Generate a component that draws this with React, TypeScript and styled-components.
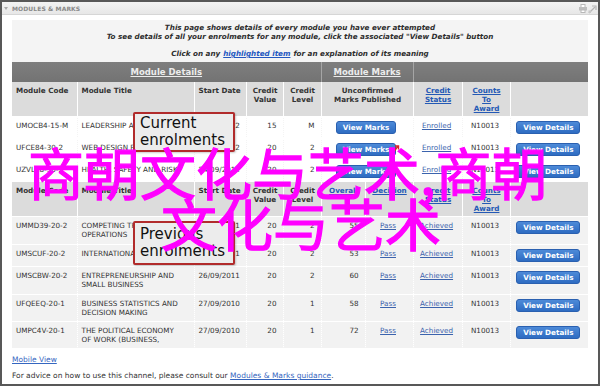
import styled, { createGlobalStyle } from 'styled-components';

type Align = 'left' | 'center' | 'right';

const GlobalStyle = createGlobalStyle`
  html, body {
    margin: 0;
    padding: 0;
    background: #fff;
  }
  body {
    font-family: 'DejaVu Sans', Verdana, sans-serif;
  }
`;

const Frame = styled.div`
  position: relative;
  width: 600px;
  height: 386px;
  box-sizing: border-box;
  border: 2px solid #585858;
  background: #fff;
  overflow: hidden;
  display: flex;
  flex-direction: column;
`;

const TitleBar = styled.div`
  height: 12px;
  flex: none;
  display: flex;
  align-items: center;
  gap: 4px;
  padding: 0 1px 0 1px;
  background: linear-gradient(#f3f3f3, #e7e7e7);
  border-bottom: 1px solid #d6d6d6;
`;

const Caret = styled.span`
  width: 0;
  height: 0;
  margin-left: 1px;
  border-left: 2.5px solid transparent;
  border-right: 2.5px solid transparent;
  border-top: 3px solid #a9a9a9;
`;

const Title = styled.span`
  flex: 1;
  font-size: 6px;
  font-weight: bold;
  color: #888;
  letter-spacing: 0.1px;
`;

const Tools = styled.div`
  display: flex;
  align-items: center;
  gap: 1px;
`;

const Body = styled.div`
  flex: 1;
  padding: 5px 10px 0;
`;

const ScrollArea = styled.div`
  height: 328px;
  overflow: hidden;
  background: #f4f4f4;
`;

const Intro = styled.div`
  padding: 3px 0 4px;
  text-align: center;
  font-size: 7.2px;
  line-height: 9px;
  font-style: italic;
  font-weight: bold;
  color: #2d2d2d;
`;

const IntroLine = styled.p<{ $gap?: number }>`
  margin: ${(p) => p.$gap ?? 0}px 0 0;
`;

const IntroLink = styled.a`
  margin: 0 3px;
  color: #2357c0;
  text-decoration: underline;
`;

const Table = styled.table`
  width: 576px;
  table-layout: fixed;
  border-collapse: collapse;
  font-size: 7.2px;
  line-height: 9px;
  color: #333;
`;

const Col = styled.col<{ $w: number }>`
  width: ${(p) => p.$w}px;
`;

const GroupCell = styled.th`
  height: 20px;
  padding: 0;
  background: linear-gradient(#7e7e7e, #737373);
  color: #ececec;
  font-size: 8.5px;
  font-weight: bold;
  text-align: center;
  border-right: 1px solid #a5a5a5;
  &:last-child {
    border-right: 0;
  }
`;

const GroupLabel = styled.span`
  text-decoration: underline;
`;

const HeadCell = styled.th<{ $align?: Align }>`
  padding: 4px 3px 3px 4px;
  background: #dcdcdc;
  text-align: ${(p) => p.$align ?? 'left'};
  vertical-align: top;
  font-weight: bold;
  white-space: pre-line;
  color: #333;
  border-right: 1px solid #fff;
  &:last-child {
    border-right: 0;
  }
`;

const HeadLink = styled.a`
  color: #2459b5;
  text-decoration: underline;
`;

const Row = styled.tr<{ $shade?: boolean }>`
  background: ${(p) => (p.$shade ? '#f2f2f2' : '#fff')};
  border-top: 1px solid #fff;
  & > td {
    padding-bottom: ${(p) => (p.$shade ? 4.5 : 4)}px;
  }
`;

const Cell = styled.td<{ $align?: Align }>`
  padding: 4px 6px 4px 4px;
  vertical-align: top;
  text-align: ${(p) => p.$align ?? 'left'};
  white-space: pre;
  overflow: hidden;
  border-right: 1px dotted #fff;
  &:last-child {
    border-right: 0;
  }
`;

const CellLink = styled.a`
  color: #3b63ad;
  text-decoration: underline;
`;

const ActionButton = styled.button<{ $w: number }>`
  display: block;
  margin: 0 auto;
  width: ${(p) => p.$w}px;
  height: 13px;
  padding: 0;
  border: 1px solid #2a60b0;
  border-radius: 3px;
  background: linear-gradient(#4d8ad8, #2e6cc2);
  color: #fff;
  font-family: 'DejaVu Sans', Verdana, sans-serif;
  font-size: 7.2px;
  font-weight: bold;
  line-height: 11px;
`;

const Footer = styled.div`
  padding-top: 7px;
  font-size: 7.5px;
  line-height: 9px;
  color: #333;
`;

const FooterLine = styled.p<{ $gap?: number }>`
  margin: ${(p) => p.$gap ?? 0}px 0 0;
`;

const FooterLink = styled.a`
  color: #3566c0;
  text-decoration: underline;
`;

const Callout = styled.div<{ $top: number; $padY: number }>`
  position: absolute;
  left: 131px;
  top: ${(p) => p.$top}px;
  width: 102px;
  box-sizing: border-box;
  padding: ${(p) => p.$padY}px 5px;
  border: 2px solid #b12b2b;
  border-radius: 2px;
  background: #ececec;
  box-shadow: 1px 1px 2px rgba(0, 0, 0, 0.2);
  font-family: 'DejaVu Sans', Verdana, sans-serif;
  font-size: 15px;
  line-height: 17px;
  color: #111;
`;

const Pointer = styled.svg`
  position: absolute;
  left: 390px;
  top: 142px;
`;

const Watermark = styled.div<{ $left: number; $top: number }>`
  position: absolute;
  left: ${(p) => p.$left}px;
  top: ${(p) => p.$top}px;
  font-family: 'Noto Sans CJK SC', sans-serif;
  font-size: 56px;
  line-height: 56px;
  color: #ff00ff;
  -webkit-text-stroke: 1.2px #ff00ff;
  white-space: nowrap;
  pointer-events: none;
`;

const widths = [65, 117, 52, 37, 38, 44, 48, 49, 48, 78];

const current = [
  { code: 'UMOCB4-15-M', title: 'LEADERSHIP AND CHANGE', start: '24/09/2012', value: '15', level: 'M' },
  { code: 'UFCE84-30-2', title: 'WEB DESIGN FOR BUSINESS', start: '24/09/2012', value: '20', level: '2' },
  { code: 'UZVLE8-30-2', title: 'HEALTH, SAFETY AND RISK', start: '24/09/2012', value: '20', level: '2' },
];

const previous = [
  { code: 'UMMD39-20-2', title: 'COMPETING THROUGH\nOPERATIONS', start: '26/09/2011', value: '20', level: '2', mark: '55' },
  { code: 'UMSCUF-20-2', title: 'INTERNATIONAL TRADE', start: '26/09/2011', value: '20', level: '2', mark: '53' },
  { code: 'UMSCBW-20-2', title: 'ENTREPRENEURSHIP AND\nSMALL BUSINESS', start: '26/09/2011', value: '20', level: '2', mark: '60' },
  { code: 'UFQEEQ-20-1', title: 'BUSINESS STATISTICS AND\nDECISION MAKING', start: '27/09/2010', value: '20', level: '1', mark: '58' },
  { code: 'UMPC4V-20-1', title: 'THE POLITICAL ECONOMY\nOF WORK (BUSINESS,', start: '27/09/2010', value: '20', level: '1', mark: '72' },
];

function PrinterIcon() {
  return (
    <svg width='8' height='9' viewBox='0 0 8 9'>
      <rect x='2' y='0.5' width='4' height='3' fill='#fff' stroke='#b8b8b8' />
      <rect x='0' y='3' width='8' height='3.5' fill='#bdbdbd' />
      <rect x='2' y='6' width='4' height='2.5' fill='#fff' stroke='#b8b8b8' />
    </svg>
  );
}

function ExpandIcon() {
  return (
    <svg width='9' height='11' viewBox='0 0 9 11'>
      <path d='M1 10 L7 4' stroke='#b5b5b5' strokeWidth='1.2' />
      <path d='M4 3 H8 V7' fill='none' stroke='#b5b5b5' strokeWidth='1.2' />
      <rect x='0.5' y='7.5' width='2.5' height='2.5' fill='#c8c8c8' />
    </svg>
  );
}

function App() {
  return (
    <>
      <GlobalStyle />
      <Frame>
        <TitleBar>
          <Caret />
          <Title>MODULES &amp; MARKS</Title>
          <Tools>
            <PrinterIcon />
            <ExpandIcon />
          </Tools>
        </TitleBar>
        <Body>
          <ScrollArea>
            <Intro>
              <IntroLine>This page shows details of every module you have ever attempted</IntroLine>
              <IntroLine>
                To see details of all your enrolments for any module, click the associated "View Details" button
              </IntroLine>
              <IntroLine $gap={8}>
                Click on any<IntroLink>highlighted item</IntroLink>for an explanation of its meaning
              </IntroLine>
            </Intro>
            <Table>
              <colgroup>
                {widths.map((w, i) => (
                  <Col key={i} $w={w} />
                ))}
              </colgroup>
              <thead>
                <tr>
                  <GroupCell colSpan={5}>
                    <GroupLabel>Module Details</GroupLabel>
                  </GroupCell>
                  <GroupCell colSpan={2}>
                    <GroupLabel>Module Marks</GroupLabel>
                  </GroupCell>
                  <GroupCell colSpan={3} />
                </tr>
                <tr>
                  <HeadCell>Module Code</HeadCell>
                  <HeadCell>Module Title</HeadCell>
                  <HeadCell>Start Date</HeadCell>
                  <HeadCell $align='center'>{'Credit\nValue'}</HeadCell>
                  <HeadCell $align='center'>{'Credit\nLevel'}</HeadCell>
                  <HeadCell $align='center' colSpan={2}>
                    {'Unconfirmed\nMarks Published'}
                  </HeadCell>
                  <HeadCell $align='center'>
                    <HeadLink>{'Credit\nStatus'}</HeadLink>
                  </HeadCell>
                  <HeadCell $align='center'>
                    <HeadLink>{'Counts\nTo\nAward'}</HeadLink>
                  </HeadCell>
                  <HeadCell />
                </tr>
              </thead>
              <tbody>
                {current.map((m) => (
                  <Row key={m.code}>
                    <Cell>{m.code}</Cell>
                    <Cell>{m.title}</Cell>
                    <Cell>{m.start}</Cell>
                    <Cell $align='right'>{m.value}</Cell>
                    <Cell $align='right'>{m.level}</Cell>
                    <Cell colSpan={2}>
                      <ActionButton $w={60}>View Marks</ActionButton>
                    </Cell>
                    <Cell $align='center'>
                      <CellLink>Enrolled</CellLink>
                    </Cell>
                    <Cell $align='center'>N10013</Cell>
                    <Cell>
                      <ActionButton $w={64}>View Details</ActionButton>
                    </Cell>
                  </Row>
                ))}
              </tbody>
              <tbody>
                <tr>
                  <HeadCell>Module Code</HeadCell>
                  <HeadCell>Module Title</HeadCell>
                  <HeadCell>Start Date</HeadCell>
                  <HeadCell $align='center'>{'Credit\nValue'}</HeadCell>
                  <HeadCell $align='center'>{'Credit\nLevel'}</HeadCell>
                  <HeadCell $align='center'>
                    <HeadLink>Overall</HeadLink>
                  </HeadCell>
                  <HeadCell $align='center'>
                    <HeadLink>Decision</HeadLink>
                  </HeadCell>
                  <HeadCell $align='center'>
                    <HeadLink>{'Credit\nStatus'}</HeadLink>
                  </HeadCell>
                  <HeadCell $align='center'>
                    <HeadLink>{'Counts\nTo\nAward'}</HeadLink>
                  </HeadCell>
                  <HeadCell />
                </tr>
                {previous.map((m) => (
                  <Row key={m.code} $shade>
                    <Cell>{m.code}</Cell>
                    <Cell>{m.title}</Cell>
                    <Cell>{m.start}</Cell>
                    <Cell $align='right'>{m.value}</Cell>
                    <Cell $align='right'>{m.level}</Cell>
                    <Cell $align='right'>{m.mark}</Cell>
                    <Cell $align='center'>
                      <CellLink>Pass</CellLink>
                    </Cell>
                    <Cell $align='center'>
                      <CellLink>Achieved</CellLink>
                    </Cell>
                    <Cell $align='center'>N10013</Cell>
                    <Cell>
                      <ActionButton $w={64}>View Details</ActionButton>
                    </Cell>
                  </Row>
                ))}
              </tbody>
            </Table>
          </ScrollArea>
          <Footer>
            <FooterLine>
              <FooterLink>Mobile View</FooterLink>
            </FooterLine>
            <FooterLine $gap={7}>
              For advice on how to use this channel, please consult our <FooterLink>Modules &amp; Marks guidance</FooterLink>.
            </FooterLine>
          </Footer>
        </Body>

        <Callout $top={110} $padY={1}>
          Current
          <br />
          enrolments
        </Callout>
        <Callout $top={219} $padY={3}>
          Previous
          <br />
          enrolments
        </Callout>
        <Pointer width='8' height='10' viewBox='0 0 8 10'>
          <path d='M1 9 L6 2 M3 2 H6.5 V5.5' fill='none' stroke='#d22' strokeWidth='1.4' />
        </Pointer>
        <Watermark $left={26} $top={141}>
          商朝文化与艺术,商朝
        </Watermark>
        <Watermark $left={159} $top={192}>
          文化与艺术
        </Watermark>
      </Frame>
    </>
  );
}

export default App;
